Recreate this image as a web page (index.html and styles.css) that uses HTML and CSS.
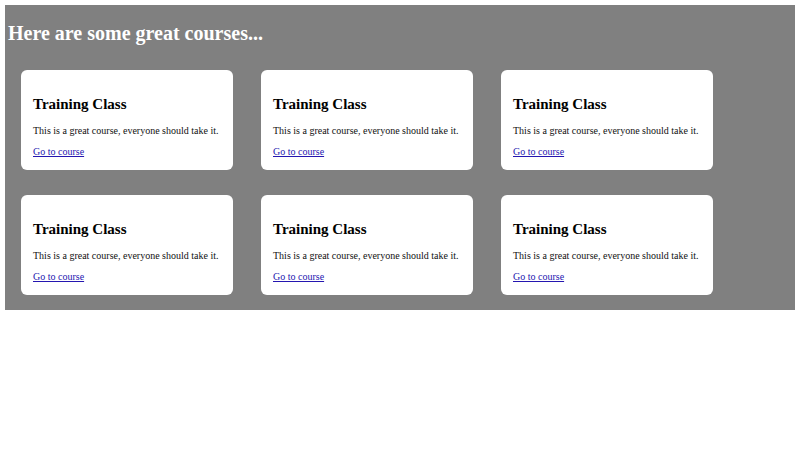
FILE: index.html
```html
<!DOCTYPE html>
<html lang="en">
<head>
<meta charset="utf-8">
<title>Courses</title>
<link rel="stylesheet" href="styles.css">
</head>
<body>
<div class="wrap">
  <h1 class="title">Here are some great courses...</h1>
  <div class="grid">
    <div class="card"><h2>Training Class</h2><p>This is a great course, everyone should take it.</p><a href="#">Go to course</a></div>
    <div class="card"><h2>Training Class</h2><p>This is a great course, everyone should take it.</p><a href="#">Go to course</a></div>
    <div class="card"><h2>Training Class</h2><p>This is a great course, everyone should take it.</p><a href="#">Go to course</a></div>
    <div class="card"><h2>Training Class</h2><p>This is a great course, everyone should take it.</p><a href="#">Go to course</a></div>
    <div class="card"><h2>Training Class</h2><p>This is a great course, everyone should take it.</p><a href="#">Go to course</a></div>
    <div class="card"><h2>Training Class</h2><p>This is a great course, everyone should take it.</p><a href="#">Go to course</a></div>
  </div>
</div>
</body>
</html>
```
FILE: styles.css
```css
html, body {
  background: #fff;
}
body {
  margin: 5px;
  font-family: "Liberation Serif", "Times New Roman", serif;
}
.wrap {
  background: #808080;
  padding: 17px 3px 15px;
}
.title {
  margin: 0;
  font-size: 20px;
  font-weight: bold;
  color: #fff;
}
.grid {
  display: grid;
  grid-template-columns: repeat(3, 212px);
  column-gap: 28px;
  row-gap: 25px;
  margin: 25px 13px 0;
}
.card {
  background: #fff;
  border-radius: 6px;
  padding: 12px;
  height: 100px;
  box-sizing: border-box;
}
.card h2 {
  margin: 14px 0 12px;
  font-size: 15px;
  font-weight: bold;
  color: #000;
}
.card p {
  margin: 0 0 10px;
  font-size: 10px;
  color: #111;
}
.card a {
  display: block;
  font-size: 10px;
  color: #2416b0;
}
```
